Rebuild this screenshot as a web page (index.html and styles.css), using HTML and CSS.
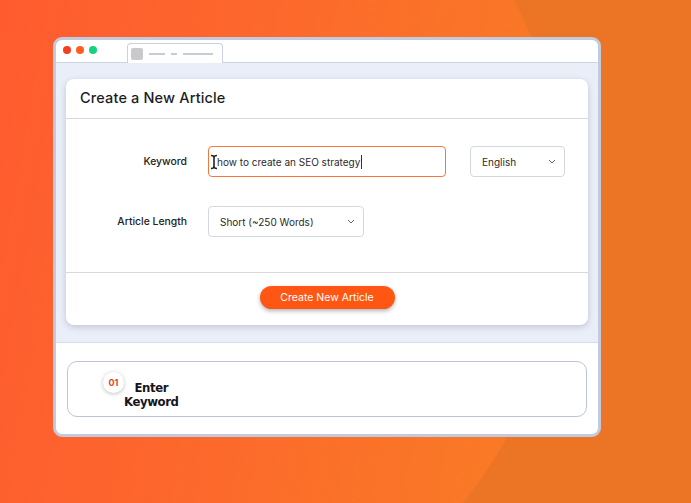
FILE: index.html
```html
<!DOCTYPE html>
<html lang="en">
<head>
    <meta charset="UTF-8">
    <meta name="viewport" content="width=device-width, initial-scale=1.0">
    <title>Create a New Article</title>
    <link rel="stylesheet" href="styles.css">
</head>
<body>
    <div class="window">
        <div class="titlebar">
            <div class="dots">
                <span class="dot red"></span>
                <span class="dot orange"></span>
                <span class="dot green"></span>
            </div>
            <div class="tab">
                <span class="tab-icon"></span>
                <span class="tab-line w16"></span>
                <span class="tab-line w6"></span>
                <span class="tab-line w30"></span>
            </div>
        </div>

        <div class="content">
            <div class="card">
                <div class="card-header">Create a New Article</div>
                <div class="card-body">
                    <label class="field-label">Keyword</label>
                    <div class="input active">
                        <svg class="ibeam" width="8" height="16" viewBox="0 0 8 16">
                            <path d="M1 1.5 Q4 1.5 4 3.5 Q4 1.5 7 1.5 M4 3.5 V12.5 M1 14.5 Q4 14.5 4 12.5 Q4 14.5 7 14.5" fill="none" stroke="#222" stroke-width="1.6"/>
                        </svg>
                        <span class="typed">how to create an SEO strategy</span>
                    </div>
                    <div class="select lang">
                        <span>English</span>
                        <svg class="chev" width="8" height="5" viewBox="0 0 8 5"><path d="M1 1 L4 4 L7 1" fill="none" stroke="#666" stroke-width="1"/></svg>
                    </div>

                    <label class="field-label">Article Length</label>
                    <div class="select length">
                        <span>Short (~250 Words)</span>
                        <svg class="chev" width="8" height="5" viewBox="0 0 8 5"><path d="M1 1 L4 4 L7 1" fill="none" stroke="#666" stroke-width="1"/></svg>
                    </div>
                </div>
                <div class="card-footer">
                    <button class="btn">Create New Article</button>
                </div>
            </div>
        </div>

        <div class="steps">
            <div class="step-box">
                <div class="step">
                    <span class="step-num">01</span>
                    <span class="step-title">Enter<br>Keyword</span>
                </div>
            </div>
        </div>
    </div>
</body>
</html>
```

FILE: styles.css
```css
html, body {
    height: 100%;
}
body {
    margin: 0;
    font-family: Inter, "Open Sans", sans-serif;
    color: #1d1d1f;
    background:
        radial-gradient(circle 466px at 100px 212px, rgba(249, 122, 38, 0) 99.6%, #eb7524 100%),
        linear-gradient(100deg, #ff5b2f 0%, #fc6a2b 40%, #f97a26 75%, #f47a25 100%);
    overflow: hidden;
}

/* browser window */
.window {
    width: 542px;
    margin: 37px 0 0 53px;
    border: 3px solid #c1cadf;
    border-radius: 9px;
    background: #fff;
    overflow: hidden;
}
.titlebar {
    height: 22px;
    display: flex;
    align-items: flex-end;
    border-bottom: 1px solid #cdd4e5;
}
.dots {
    display: flex;
    gap: 5px;
    padding: 0 0 8px 7px;
}
.dot {
    width: 8px;
    height: 8px;
    border-radius: 50%;
}
.dot.red { background: #f53e22; }
.dot.orange { background: #ff5e1e; }
.dot.green { background: #16d17f; }
.tab {
    margin: 0 0 -1px 30px;
    width: 96px;
    height: 20px;
    border: 1px solid #cad1e2;
    border-bottom: none;
    border-radius: 4px 4px 0 0;
    display: flex;
    align-items: center;
    padding-left: 3px;
    gap: 6px;
    box-sizing: border-box;
    background: #fff;
}
.tab-icon {
    width: 12px;
    height: 12px;
    border-radius: 2px;
    background: #c9c9cc;
}
.tab-line {
    height: 2px;
    background: #c9ccd4;
}
.w16 { width: 16px; }
.w6 { width: 6px; }
.w30 { width: 30px; }

.content {
    background: #eaeef8;
    padding: 16px 10px 17px;
    border-bottom: 1px solid #d7dcea;
}
.card {
    background: #fff;
    border-radius: 8px;
    box-shadow: 0 2px 6px rgba(40, 50, 80, 0.22);
}
.card-header {
    height: 40px;
    line-height: 38px;
    padding-left: 14px;
    font-size: 14.5px;
    font-weight: 500;
    letter-spacing: 0.15px;
    border-bottom: 1px solid #d9d9dc;
    box-sizing: border-box;
}
.card-body {
    display: grid;
    grid-template-columns: 121px 238px 95px;
    grid-template-rows: 31px 31px;
    column-gap: 21px;
    row-gap: 29px;
    padding: 27px 0 35px;
    border-bottom: 1px solid #d9d9dc;
    align-items: center;
}
.card-body .lang {
    width: 95px;
    margin-left: 3px;
}
.field-label {
    text-align: right;
    font-size: 10.4px;
    font-weight: 500;
    color: #222;
}
.input, .select {
    height: 31px;
    box-sizing: border-box;
    border: 1px solid #d3d7df;
    border-radius: 4px;
    display: flex;
    align-items: center;
    font-size: 10px;
    color: #2a2a2a;
}
.input.active {
    border-color: #f4773c;
    position: relative;
    padding-left: 8px;
}
.ibeam {
    position: absolute;
    left: 1px;
    top: 7px;
}
.typed {
    border-right: 1px solid #333;
    padding-right: 1px;
    line-height: 14px;
}
.select {
    justify-content: space-between;
    padding: 0 8px 0 11px;
}
.select.length {
    width: 156px;
}
.chev {
    flex: none;
}
.card-footer {
    padding: 13px 0 16px;
    display: flex;
    justify-content: center;
}
.btn {
    width: 135px;
    height: 23px;
    border: none;
    border-radius: 12px;
    background: #ff5613;
    color: #fff;
    font-family: inherit;
    font-size: 10.5px;
    box-shadow: 0 2px 4px rgba(0, 0, 0, 0.3);
}

/* step list */
.steps {
    padding: 18px 11px 17px;
}
.step-box {
    height: 56px;
    box-sizing: border-box;
    border: 1px solid #bcc4db;
    border-radius: 10px;
    padding: 10px 0 0 35px;
}
.step {
    display: flex;
    align-items: flex-start;
}
.step-num {
    width: 21px;
    height: 21px;
    border-radius: 50%;
    background: #fff;
    box-shadow: 0 1px 4px rgba(0, 0, 0, 0.25);
    color: #e5432a;
    font-size: 9px;
    font-weight: 700;
    display: flex;
    align-items: center;
    justify-content: center;
}
.step-title {
    margin: 9px 0 0 0;
    text-align: center;
    font-family: "DejaVu Sans Condensed", "DejaVu Sans", sans-serif;
    font-weight: 700;
    font-size: 13px;
    line-height: 14px;
    letter-spacing: -0.4px;
    color: #15151a;
}
```
